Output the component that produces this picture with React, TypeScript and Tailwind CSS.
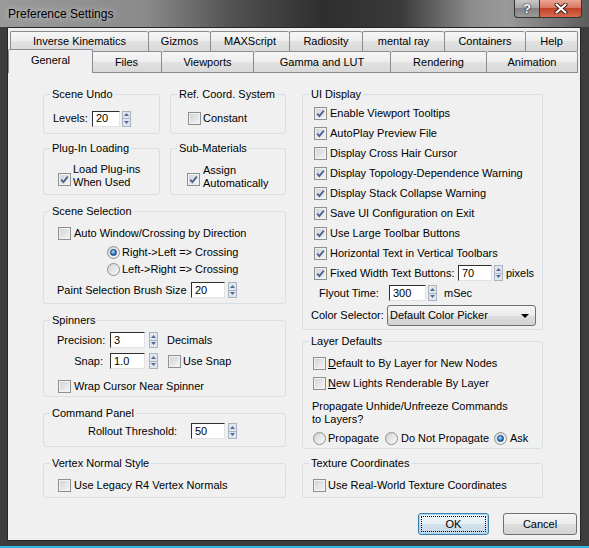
import type { ReactNode } from "react";

function Check({ on, className = "" }: { on?: boolean; className?: string }) {
  return (
    <span
      className={
        "flex h-[13px] w-[13px] shrink-0 items-center justify-center border border-[#8e8f8f] bg-[linear-gradient(135deg,#cdd0d4,#f7f7f7)] shadow-[inset_0_0_0_1px_#f2f2f2] " +
        className
      }
    >
      {on && (
        <svg width="11" height="11" viewBox="0 0 11 11">
          <path d="M2.2 5.6 L4.4 8 L8.8 2.6" fill="none" stroke="#4b5f91" strokeWidth="1.8" />
        </svg>
      )}
    </span>
  );
}

function Radio({ on }: { on?: boolean }) {
  return (
    <span className="flex h-[13px] w-[13px] shrink-0 items-center justify-center rounded-full border border-[#8e8f8f] bg-[linear-gradient(135deg,#cfd2d6,#fbfbfb)]">
      {on && (
        <span className="h-[7px] w-[7px] rounded-full border border-[#16407a] bg-[radial-gradient(circle_at_40%_35%,#bfe6ff,#2f7cc8_55%,#123f7c)]" />
      )}
    </span>
  );
}

function Spin({ className = "" }: { className?: string }) {
  return (
    <span className={"flex h-[16px] w-[9px] shrink-0 flex-col border border-[#aab3c0] bg-[#e1e6ec] " + className}>
      <span className="flex flex-1 items-center justify-center border-b border-[#aab3c0]">
        <svg width="5" height="3" viewBox="0 0 5 3">
          <path d="M0 3 L2.5 0 L5 3Z" fill="#4f6b98" />
        </svg>
      </span>
      <span className="flex flex-1 items-center justify-center">
        <svg width="5" height="3" viewBox="0 0 5 3">
          <path d="M0 0 L2.5 3 L5 0Z" fill="#4f6b98" />
        </svg>
      </span>
    </span>
  );
}

function Field({ value, className }: { value: string; className: string }) {
  return (
    <span
      className={
        "flex h-[16px] shrink-0 items-center border border-t-[#2e2e2e] border-l-[#2e2e2e] border-r-[#e2e2e2] border-b-[#e2e2e2] bg-white pl-[3px] leading-none " +
        className
      }
    >
      {value}
    </span>
  );
}

function Group({ title, className, children }: { title: string; className: string; children?: ReactNode }) {
  return (
    <fieldset className={"shrink-0 rounded-[3px] border border-[#d5dfe5] " + className}>
      <legend className="ml-[6px] px-[2px] leading-[13px]">{title}</legend>
      {children}
    </fieldset>
  );
}

function CheckRow({ on, label, className = "" }: { on?: boolean; label: ReactNode; className?: string }) {
  return (
    <div className={"flex h-[20px] items-center whitespace-nowrap " + className}>
      <Check on={on} />
      <span className="ml-[3px]">{label}</span>
    </div>
  );
}

const topTabs = [
  ["Inverse Kinematics", "w-[138px]"],
  ["Gizmos", "w-[62px]"],
  ["MAXScript", "w-[79px]"],
  ["Radiosity", "w-[73px]"],
  ["mental ray", "w-[82px]"],
  ["Containers", "w-[81px]"],
  ["Help", "w-[53px]"],
];

const bottomTabs = [
  ["Files", "w-[71px]"],
  ["Viewports", "w-[92px]"],
  ["Gamma and LUT", "w-[137px]"],
  ["Rendering", "w-[96px]"],
  ["Animation", "w-[91px]"],
];

const tabBg = "bg-[linear-gradient(#f6f6f6,#ededed_50%,#e2e2e2_50%,#d9d9d9)]";

export default function App() {
  return (
    <div className="flex h-[548px] w-[589px] flex-col overflow-hidden bg-[#3d3d3d] font-['Liberation_Sans',Arial,sans-serif] text-[11px] text-black">
      {/* Title bar */}
      <div className="flex h-[27px] shrink-0 bg-[linear-gradient(90deg,#9a9a9a_0%,#8a8a8a_25%,#505050_40%,#2e2e2e_55%,#3a3a3a_68%,#8c8c8c_80%,#9a9a9a_86%,#5c5c5c_100%)]">
        <span className="pl-[8px] pt-[6px] text-[12px] leading-[16px] [text-shadow:0_0_6px_rgba(255,255,255,0.7)]">
          Preference Settings
        </span>
        <div className="ml-auto mr-[7px] flex h-[18px]">
          <div className="flex w-[26px] items-center justify-center rounded-bl-[4px] border border-t-0 border-[#333] bg-[linear-gradient(#c8c8c8,#a7a7a7_45%,#828282_50%,#9c9c9c)] text-[13px] font-bold leading-none text-white [text-shadow:0_0_2px_#222,0_0_1px_#000]">
            ?
          </div>
          <div className="flex w-[42px] items-center justify-center rounded-br-[4px] border border-l-0 border-t-0 border-[#333] bg-[linear-gradient(#eaa796,#d87860_45%,#c2422a_50%,#d76b4f)]">
            <svg width="14" height="11" viewBox="0 0 14 11">
              <path d="M2.5 1.5 L11.5 9.5 M11.5 1.5 L2.5 9.5" stroke="#3a1a14" strokeWidth="4" strokeLinecap="round" />
              <path d="M2.5 1.5 L11.5 9.5 M11.5 1.5 L2.5 9.5" stroke="#fff" strokeWidth="2.2" strokeLinecap="round" />
            </svg>
          </div>
        </div>
      </div>

      {/* Client area */}
      <div className="ml-[7px] flex h-[514px] w-[574px] shrink-0 flex-col border border-[#262626] bg-[#f0f0f0]">
        {/* Tabs */}
        <div className="ml-[2px] mt-[3px] flex w-[568px] flex-col">
          <div className="flex h-[20px]">
            {topTabs.map(([label, w], i) => (
              <div
                key={label}
                className={
                  "flex items-center justify-center rounded-t-[2px] border-l border-t border-[#898c95] " +
                  tabBg +
                  " " +
                  w +
                  (i === topTabs.length - 1 ? " border-r" : "")
                }
              >
                {label}
              </div>
            ))}
          </div>
          <div className="flex h-[21px]">
            <div className="relative z-10 -mx-[2px] -mt-[2px] flex h-[24px] w-[85px] items-center justify-center rounded-t-[2px] border-x border-t border-[#898c95] bg-[#f0f0f0] pb-[2px]">
              General
            </div>
            {bottomTabs.map(([label, w], i) => (
              <div
                key={label}
                className={
                  "flex items-center justify-center rounded-t-[2px] border-t border-r border-[#898c95] " +
                  tabBg +
                  " " +
                  w +
                  (i === 0 ? " border-l" : "")
                }
              >
                {label}
              </div>
            ))}
          </div>
        </div>

        {/* Panel */}
        <div className="ml-[2px] flex h-[434px] w-[568px] shrink-0 gap-[16px] border-t border-[#898c95] pl-[33px] pt-[15px]">
          {/* Left column */}
          <div className="flex w-[243px] flex-col">
            <div className="flex gap-[10px]">
              <Group title="Scene Undo" className="h-[46px] w-[117px]">
                <div className="mt-[10px] flex h-[15px] items-center pl-[9px]">
                  <span className="w-[39px]">Levels:</span>
                  <Field value="20" className="h-[15px] w-[28px]" />
                  <Spin className="ml-[2px] h-[15px]" />
                </div>
              </Group>
              <Group title="Ref. Coord. System" className="h-[46px] w-[116px]">
                <div className="mt-[10px] flex h-[15px] items-center pl-[17px]">
                  <Check />
                  <span className="ml-[2px]">Constant</span>
                </div>
              </Group>
            </div>

            <div className="mt-[8px] flex gap-[10px]">
              <Group title="Plug-In Loading" className="h-[53px] w-[117px]">
                <div className="mt-[8px] flex items-start pl-[14px]">
                  <Check on className="mt-[10px]" />
                  <span className="ml-[2px] leading-[13px]">
                    Load Plug-ins
                    <br />
                    When Used
                  </span>
                </div>
              </Group>
              <Group title="Sub-Materials" className="h-[53px] w-[116px]">
                <div className="mt-[9px] flex items-start pl-[16px]">
                  <Check on className="mt-[9px]" />
                  <span className="ml-[3px] leading-[13px]">
                    Assign
                    <br />
                    Automatically
                  </span>
                </div>
              </Group>
            </div>

            <Group title="Scene Selection" className="mt-[10px] h-[99px] w-[243px]">
              <CheckRow label="Auto Window/Crossing by Direction" className="mt-[5px] pl-[14px]" />
              <div className="flex h-[18px] items-center pl-[63px]">
                <Radio on />
                <span className="ml-[2px]">Right-&gt;Left =&gt; Crossing</span>
              </div>
              <div className="flex h-[17px] items-center pl-[63px]">
                <Radio />
                <span className="ml-[2px]">Left-&gt;Right =&gt; Crossing</span>
              </div>
              <div className="mt-[4px] flex h-[16px] items-center pl-[13px]">
                <span className="w-[134px] whitespace-nowrap">Paint Selection Brush Size</span>
                <Field value="20" className="w-[34px]" />
                <Spin className="ml-[3px]" />
              </div>
            </Group>

            <Group title="Spinners" className="mt-[10px] h-[83px] w-[243px]">
              <div className="mt-[5px] flex h-[16px] items-center pl-[13px]">
                <span className="w-[46px] text-right">Precision:</span>
                <Field value="3" className="ml-[7px] w-[35px]" />
                <Spin className="ml-[4px]" />
                <span className="ml-[9px]">Decimals</span>
              </div>
              <div className="mt-[5px] flex h-[16px] items-center pl-[13px]">
                <span className="w-[46px] text-right">Snap:</span>
                <Field value="1.0" className="ml-[7px] w-[35px]" />
                <Spin className="ml-[4px]" />
                <Check className="ml-[10px]" />
                <span className="ml-[2px]">Use Snap</span>
              </div>
              <CheckRow label="Wrap Cursor Near Spinner" className="mt-[7px] pl-[14px]" />
            </Group>

            <Group title="Command Panel" className="mt-[10px] h-[40px] w-[243px]">
              <div className="mt-[3px] flex h-[16px] items-center pl-[44px]">
                <span className="w-[103px]">Rollout Threshold:</span>
                <Field value="50" className="w-[34px]" />
                <Spin className="ml-[3px]" />
              </div>
            </Group>

            <Group title="Vertex Normal Style" className="mt-[10px] h-[41px] w-[243px]">
              <CheckRow label="Use Legacy R4 Vertex Normals" className="mt-[5px] pl-[14px]" />
            </Group>
          </div>

          {/* Right column */}
          <div className="flex w-[241px] flex-col">
            <Group title="UI Display" className="h-[242px] w-[241px]">
              <div className="mt-[2px] flex flex-col pl-[11px]">
                <CheckRow on label="Enable Viewport Tooltips" />
                <CheckRow on label="AutoPlay Preview File" />
                <CheckRow label="Display Cross Hair Cursor" />
                <CheckRow on label="Display Topology-Dependence Warning" />
                <CheckRow on label="Display Stack Collapse Warning" />
                <CheckRow on label="Save UI Configuration on Exit" />
                <CheckRow on label="Use Large Toolbar Buttons" />
                <CheckRow on label="Horizontal Text in Vertical Toolbars" />
                <div className="flex h-[20px] items-center whitespace-nowrap">
                  <Check on />
                  <span className="ml-[3px] w-[128px]">Fixed Width Text Buttons:</span>
                  <Field value="70" className="w-[34px]" />
                  <Spin className="ml-[2px]" />
                  <span className="ml-[3px]">pixels</span>
                </div>
              </div>
              <div className="flex h-[20px] items-center pl-[16px]">
                <span className="w-[70px]">Flyout Time:</span>
                <Field value="300" className="w-[37px]" />
                <Spin className="ml-[2px]" />
                <span className="ml-[7px]">mSec</span>
              </div>
              <div className="mt-[2px] flex h-[21px] items-center pl-[8px]">
                <span className="w-[76px]">Color Selector:</span>
                <div className="flex h-[21px] w-[149px] items-center rounded-[3px] border border-[#707070] bg-[linear-gradient(#f4f4f4,#ececec_50%,#dedede_50%,#d2d2d2)] pl-[2px] pr-[6px]">
                  <span>Default Color Picker</span>
                  <svg className="ml-auto" width="8" height="4" viewBox="0 0 8 4">
                    <path d="M0 0 L8 0 L4 4Z" fill="#000" />
                  </svg>
                </div>
              </div>
            </Group>

            <Group title="Layer Defaults" className="mt-[5px] h-[114px] w-[241px]">
              <div className="flex flex-col pl-[10px]">
                <div className="mt-[5px] flex h-[20px] items-center">
                  <Check />
                  <span className="ml-[2px]">
                    <u>D</u>efault to By Layer for New Nodes
                  </span>
                </div>
                <div className="flex h-[21px] items-center">
                  <Check />
                  <span className="ml-[2px]">
                    <u>N</u>ew Lights Renderable By Layer
                  </span>
                </div>
              </div>
              <div className="mt-[6px] pl-[9px] leading-[13px]">
                Propagate Unhide/Unfreeze Commands
                <br />
                to Layers?
              </div>
              <div className="mt-[2px] flex h-[20px] items-center pl-[10px]">
                <div className="flex w-[72px] items-center">
                  <Radio />
                  <span className="ml-[2px]">Propagate</span>
                </div>
                <div className="flex w-[109px] items-center">
                  <Radio />
                  <span className="ml-[3px]">Do Not Propagate</span>
                </div>
                <div className="flex items-center">
                  <Radio on />
                  <span className="ml-[3px]">Ask</span>
                </div>
              </div>
            </Group>

            <Group title="Texture Coordinates" className="mt-[8px] h-[41px] w-[241px]">
              <div className="mt-[5px] flex h-[20px] items-center pl-[10px]">
                <Check />
                <span className="ml-[2px]">Use Real-World Texture Coordinates</span>
              </div>
            </Group>
          </div>
        </div>

        {/* Buttons */}
        <div className="mt-[7px] flex justify-end gap-[14px] pr-[3px]">
          <button className="flex h-[22px] w-[71px] rounded-[3px] border border-[#3c7fb1] bg-[linear-gradient(#f2f8fb,#e4eef4_50%,#d3e2ec_50%,#c6d9e6)] p-[2px] shadow-[inset_0_0_0_1px_#a9d7f2]">
            <span className="flex flex-1 items-center justify-center border border-dotted border-black">OK</span>
          </button>
          <button className="flex h-[22px] w-[74px] items-center justify-center rounded-[3px] border border-[#707070] bg-[linear-gradient(#f4f4f4,#ececec_50%,#dedede_50%,#d2d2d2)]">
            Cancel
          </button>
        </div>
      </div>

      {/* Bottom frame */}
      <div className="mt-auto h-[2px] bg-[#33b5ea]" />
    </div>
  );
}
